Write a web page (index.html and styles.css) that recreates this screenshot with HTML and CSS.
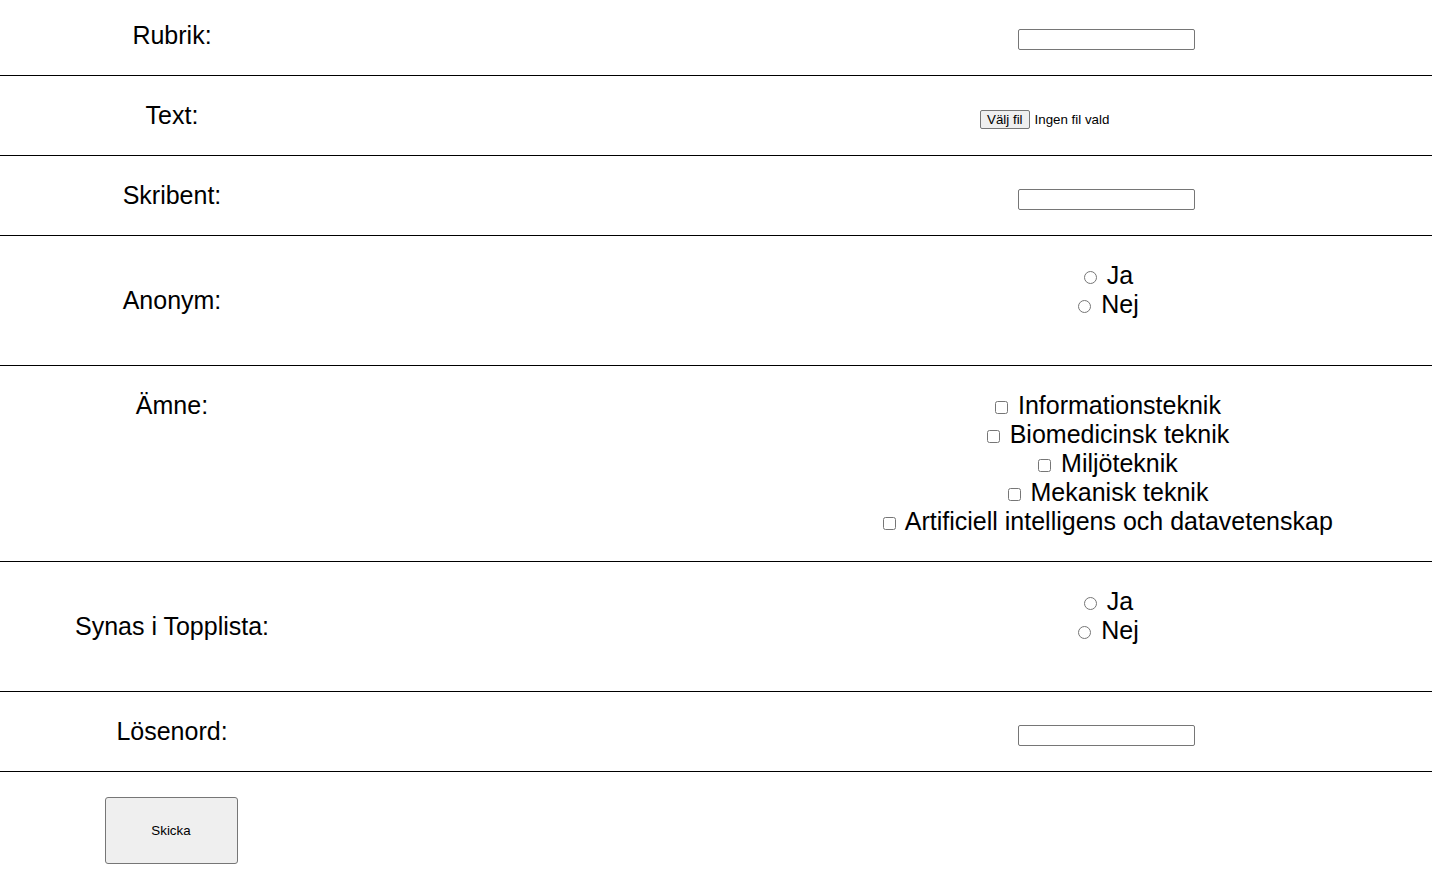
FILE: index.html
```html
<!DOCTYPE html>
<html lang="sv">
<head>
<meta charset="utf-8">
<title>Skicka artikel</title>
<link rel="stylesheet" href="styles.css">
</head>
<body>
<form class="form">
  <div class="row row-first">
    <div class="label">Rubrik:</div>
    <div class="field"><input class="text-input" type="text" name="rubrik"></div>
  </div>
  <div class="row">
    <div class="label">Text:</div>
    <div class="field"><label class="file"><input class="file-hidden" type="file" name="text"><span class="file-btn">Välj fil</span><span class="file-name">Ingen fil vald</span></label></div>
  </div>
  <div class="row">
    <div class="label">Skribent:</div>
    <div class="field"><input class="text-input" type="text" name="skribent"></div>
  </div>
  <div class="row row-tall">
    <div class="label">Anonym:</div>
    <div class="field">
      <div class="option"><input type="radio" name="anonym" value="ja"> Ja</div>
      <div class="option"><input type="radio" name="anonym" value="nej"> Nej</div>
    </div>
  </div>
  <div class="row">
    <div class="label label-top">Ämne:</div>
    <div class="field">
      <div class="option"><input type="checkbox" name="amne"> Informationsteknik</div>
      <div class="option"><input type="checkbox" name="amne"> Biomedicinsk teknik</div>
      <div class="option"><input type="checkbox" name="amne"> Miljöteknik</div>
      <div class="option"><input type="checkbox" name="amne"> Mekanisk teknik</div>
      <div class="option"><input type="checkbox" name="amne"> Artificiell intelligens och datavetenskap</div>
    </div>
  </div>
  <div class="row row-tall">
    <div class="label">Synas i Topplista:</div>
    <div class="field">
      <div class="option"><input type="radio" name="topplista" value="ja"> Ja</div>
      <div class="option"><input type="radio" name="topplista" value="nej"> Nej</div>
    </div>
  </div>
  <div class="row">
    <div class="label">Lösenord:</div>
    <div class="field"><input class="text-input" type="password" name="losenord"></div>
  </div>
  <div class="submit-row">
    <div class="submit-cell"><button class="submit" type="submit">Skicka</button></div>
  </div>
</form>
</body>
</html>
```

FILE: styles.css
```css
html, body {
  margin: 0;
  padding: 0;
  background: #fff;
}

body {
  font-family: "Liberation Sans", Arial, sans-serif;
  font-size: 25px;
  line-height: 29px;
  color: #000;
}

.form {
  margin: 0;
}

.row {
  display: grid;
  grid-template-columns: 344px 1fr 652px;
  box-sizing: border-box;
  min-height: 80px;
  padding: 25px 0;
  border-bottom: 1px solid #000;
}

.row-first {
  min-height: 76px;
  padding-top: 21px;
}

.row-tall {
  height: 130px;
}

.label {
  grid-column: 1;
  align-self: center;
  text-align: center;
}

.label-top {
  align-self: start;
}

.field {
  grid-column: 3;
  align-self: start;
  text-align: center;
}

.text-input {
  box-sizing: border-box;
  width: 177px;
  height: 21px;
  margin: 0;
  padding: 1px 2px;
  border: 1px solid #767676;
  border-radius: 2px;
  font-family: "Liberation Sans", Arial, sans-serif;
  font-size: 13.333px;
  background: #fff;
}

.file {
  display: inline-block;
  width: 252px;
  text-align: left;
  font-size: 13.333px;
  line-height: normal;
  cursor: default;
}

.file-hidden {
  display: none;
}

.file-btn {
  display: inline-block;
  padding: 1px 6px;
  margin-right: 5px;
  border: 1px solid #767676;
  border-radius: 2px;
  background: #efefef;
  color: #000;
}

.file-name {
  color: #000;
}

.option {
  white-space: nowrap;
}

.submit-row {
  display: grid;
  grid-template-columns: 342px 1fr;
  padding-top: 25px;
}

.submit-cell {
  text-align: center;
}

.submit {
  box-sizing: border-box;
  width: 133px;
  height: 67px;
  margin: 0;
  border: 1px solid #767676;
  border-radius: 3px;
  background: #efefef;
  font-family: "Liberation Sans", Arial, sans-serif;
  font-size: 13.333px;
  color: #000;
}
```
